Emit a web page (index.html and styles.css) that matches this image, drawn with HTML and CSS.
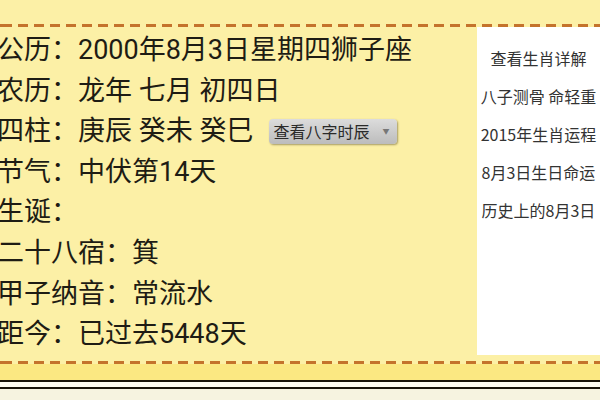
FILE: index.html
```html
<!DOCTYPE html>
<html lang="zh">
<head>
<meta charset="utf-8">
<link rel="stylesheet" href="styles.css">
</head>
<body>
<div class="page">
  <div class="top"></div>
  <div class="dash"></div>
  <div class="main">
    <div class="info">
      <div class="row">公历：2000年8月3日星期四狮子座</div>
      <div class="row">农历：龙年 七月 初四日</div>
      <div class="row">四柱：庚辰 癸未 癸巳<span class="btn">查看八字时辰<span class="arrow">▼</span></span></div>
      <div class="row">节气：中伏第14天</div>
      <div class="row">生诞：</div>
      <div class="row">二十八宿：箕</div>
      <div class="row">甲子纳音：常流水</div>
      <div class="row">距今：已过去5448天</div>
    </div>
    <div class="side">
      <div class="link">查看生肖详解</div>
      <div class="link">八子测骨 命轻重</div>
      <div class="link">2015年生肖运程</div>
      <div class="link">8月3日生日命运</div>
      <div class="link">历史上的8月3日</div>
    </div>
  </div>
  <div class="dash dash-bottom"></div>
  <div class="strip"></div>
  <div class="rule"></div>
  <div class="gap"></div>
  <div class="rule"></div>
  <div class="foot"></div>
</div>
</body>
</html>
```

FILE: styles.css
```css
html, body {
  margin: 0;
  padding: 0;
}
body {
  width: 600px;
  height: 400px;
  overflow: hidden;
  background: #f7f4e2;
  font-family: Roboto, "Noto Sans CJK SC", sans-serif;
  color: #1e1c14;
}
.page {
  display: flex;
  flex-direction: column;
  height: 400px;
}
.top {
  height: 24px;
  background: #fcf0a6;
}
.dash {
  height: 3px;
  background-color: #fcf0a6;
  background-image: repeating-linear-gradient(to right, #c4732c 0 10px, transparent 10px 16px);
  background-position: 2px 0;
}
.main {
  display: flex;
  height: 328px;
  background: #fcf0a6;
}
.info {
  flex: 1;
  padding-top: 3px;
  margin-left: -3px;
  overflow: hidden;
}
.row {
  height: 40.6px;
  line-height: 40.6px;
  font-size: 27px;
  white-space: nowrap;
}
.btn {
  display: inline-block;
  vertical-align: middle;
  margin-left: 16px;
  margin-top: -3px;
  height: 25px;
  line-height: 25px;
  padding: 0 8px 0 4px;
  font-size: 16px;
  font-family: "Noto Sans CJK SC", sans-serif;
  color: #2a2a2a;
  background: linear-gradient(#dcdcdc, #bcbcbc);
  border-radius: 4px;
  box-shadow: 1px 1px 2px rgba(60, 50, 20, 0.45);
}
.arrow {
  font-size: 7px;
  color: #777;
  margin-left: 13px;
  vertical-align: middle;
  position: relative;
  top: -2px;
}
.side {
  width: 123px;
  background: #fff;
  padding-top: 12px;
  box-sizing: border-box;
}
.link {
  height: 38px;
  line-height: 38px;
  font-size: 16px;
  font-family: "Noto Sans CJK SC", sans-serif;
  color: #333;
  text-align: center;
  white-space: nowrap;
}
.dash-bottom {
  border-top: 6px solid #fcf0a6;
}
.strip {
  height: 16px;
  background: #fbe882;
}
.rule {
  height: 2px;
  background: #1a1408;
}
.gap {
  height: 5px;
  background: #fffcf0;
}
.foot {
  flex: 1;
  background: #f6f3e0;
}
```
